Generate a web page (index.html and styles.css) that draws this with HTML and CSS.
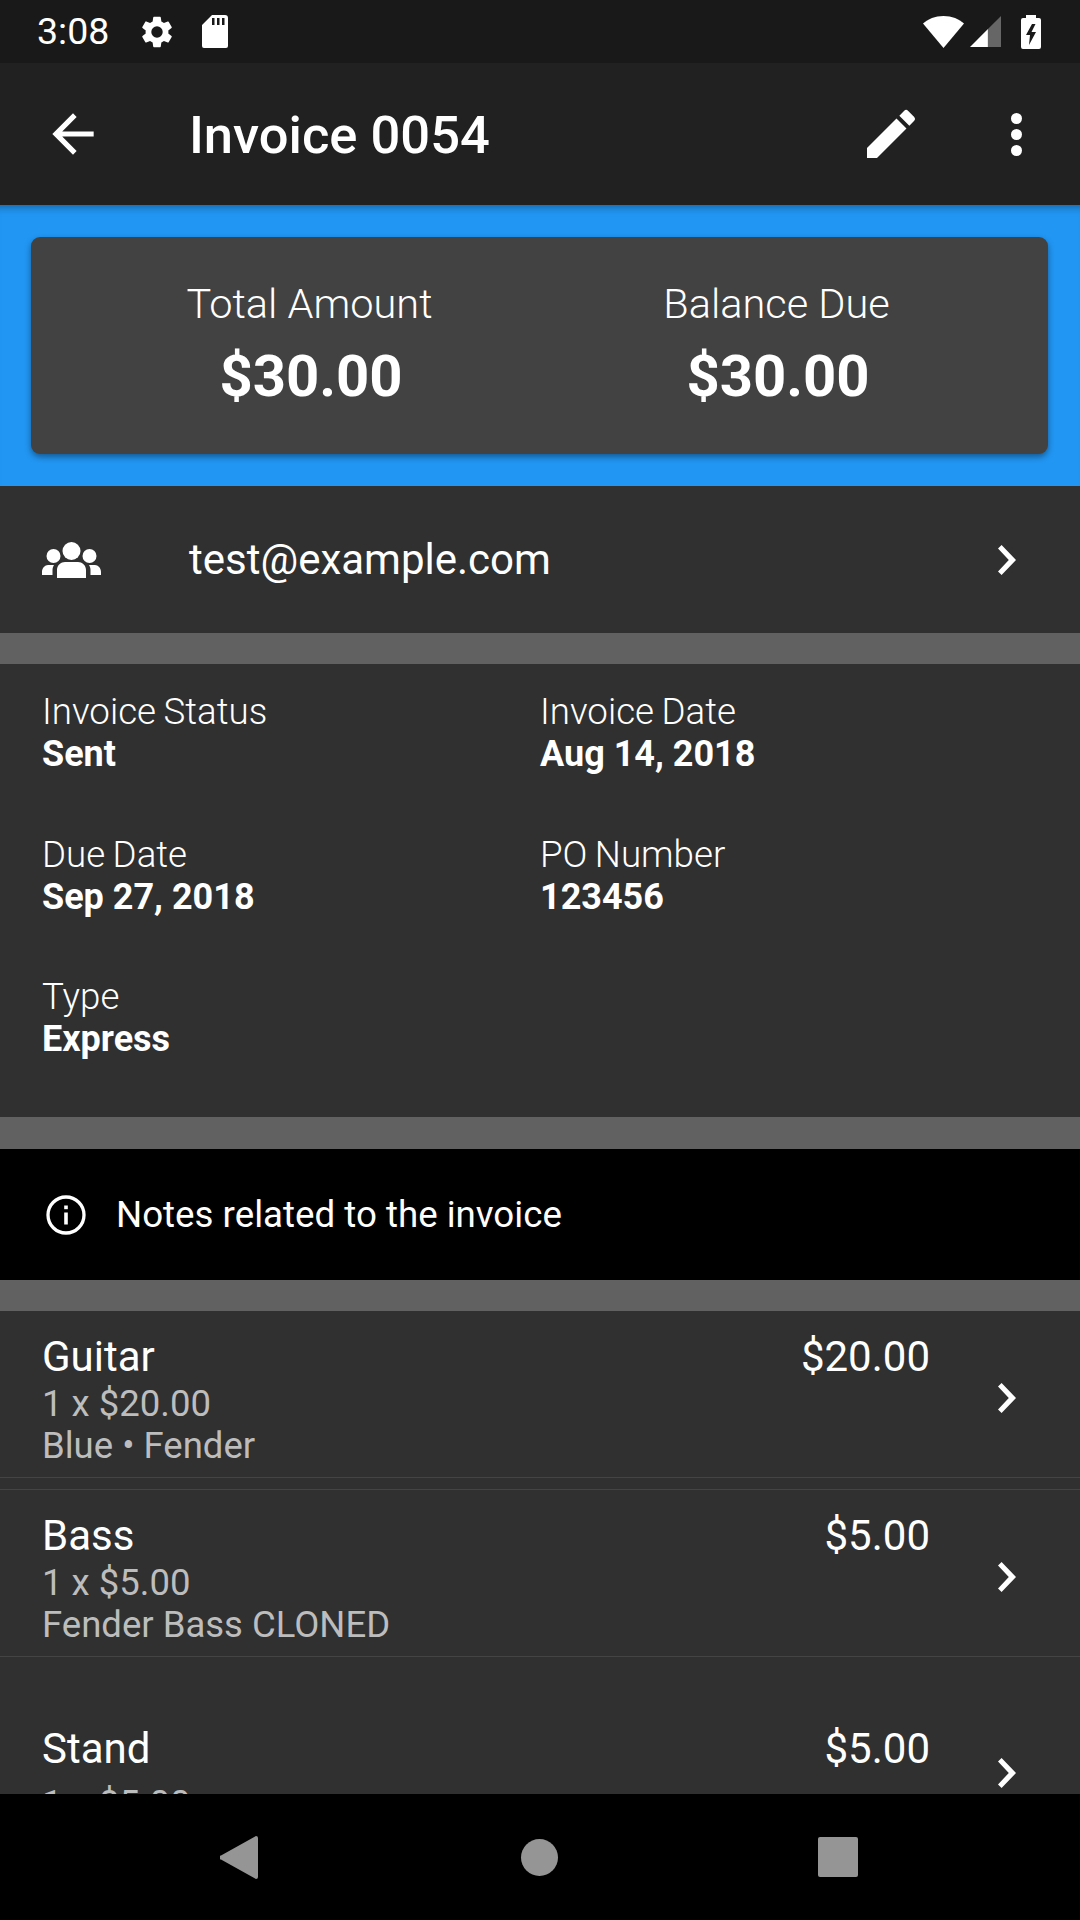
FILE: index.html
```html
<!DOCTYPE html>
<html lang="en">
<head>
<meta charset="utf-8">
<title>Invoice 0054</title>
<link rel="stylesheet" href="styles.css">
</head>
<body>
<div class="screen">
  <header class="status">
    <span class="clock">3:08</span>
    <svg class="st-gear" viewBox="0 0 24 24"><path d="M19.14 12.94c.04-.3.06-.61.06-.94s-.02-.64-.07-.94l2.03-1.58a.49.49 0 0 0 .12-.61l-1.92-3.32a.49.49 0 0 0-.59-.22l-2.39.96a7 7 0 0 0-1.62-.94l-.36-2.54a.48.48 0 0 0-.48-.41h-3.84a.47.47 0 0 0-.47.41l-.36 2.54c-.59.24-1.13.57-1.62.94l-2.39-.96a.48.48 0 0 0-.59.22L2.74 8.87a.47.47 0 0 0 .12.61l2.03 1.58c-.05.3-.09.63-.09.94s.02.64.07.94l-2.03 1.58a.49.49 0 0 0-.12.61l1.92 3.32c.12.22.37.29.59.22l2.39-.96c.5.38 1.03.7 1.62.94l.36 2.54c.05.24.24.41.48.41h3.84c.24 0 .44-.17.47-.41l.36-2.54c.59-.24 1.13-.56 1.62-.94l2.39.96c.22.08.47 0 .59-.22l1.92-3.32a.47.47 0 0 0-.12-.61zM12 15.6A3.6 3.6 0 1 1 12 8.4a3.6 3.6 0 0 1 0 7.2z"/></svg>
    <svg class="st-sd" viewBox="0 0 26 33"><path fill-rule="evenodd" d="M10 0h13a3 3 0 0 1 3 3v28a2 2 0 0 1-2 2H2a2 2 0 0 1-2-2V10zM10 3v7h2.500V3zM15 3v7h2.500V3zM20 3v7h2.500V3z"/></svg>
    <span class="grow"></span>
    <svg class="st-wifi" viewBox="0 0 41 32"><path d="M20.500 32 0 7.500C5 3 12 0 20.500 0S36 3 41 7.500z"/></svg>
    <svg class="st-signal" viewBox="0 0 32 32"><path fill="#fff" d="M0 32 18.500 13.500V32z"/><path fill="#666" d="M18.500 13.500 32 0v32H18.500z"/></svg>
    <svg class="st-batt" viewBox="0 0 20 34"><path fill-rule="evenodd" d="M5 3V0h10v3h3a2 2 0 0 1 2 2v27a2 2 0 0 1-2 2H2a2 2 0 0 1-2-2V5a2 2 0 0 1 2-2zM11 9 5 20h4l-1 10 7-13h-4.500l4-8z"/></svg>
  </header>

  <div class="appbar">
    <svg class="ab-back" viewBox="0 0 24 24"><path d="M20 11H7.830l5.590-5.590L12 4l-8 8 8 8 1.410-1.410L7.830 13H20z"/></svg>
    <h1 class="ab-title">Invoice 0054</h1>
    <svg class="ab-edit" viewBox="0 0 24 24"><path d="M3 17.250V21h3.750L17.810 9.940l-3.750-3.750zM20.710 7.040a1 1 0 0 0 0-1.410l-2.340-2.340a1 1 0 0 0-1.410 0l-1.830 1.830 3.750 3.750z"/></svg>
    <svg class="ab-more" viewBox="0 0 11 43"><circle cx="5.500" cy="5.500" r="5.500"/><circle cx="5.500" cy="21.500" r="5.500"/><circle cx="5.500" cy="37.500" r="5.500"/></svg>
  </div>

  <section class="hero">
    <div class="card">
      <div class="total"><div class="t-label">Total Amount</div><div class="t-value">$30.00</div></div>
      <div class="total"><div class="t-label">Balance Due</div><div class="t-value">$30.00</div></div>
    </div>
  </section>

  <div class="client">
    <svg class="cl-icon" viewBox="0 0 59 36"><circle cx="29.500" cy="9" r="9"/><circle cx="11.500" cy="14" r="7"/><circle cx="47.500" cy="14" r="7"/><path d="M15 36V28c0-5 4-8 8-8h13c4 0 8 3 8 8v8zM0 33v-3c0-4 3-7 6-7h6c-1 2-1.500 3-1.500 5v5zM59 33v-3c0-4-3-7-6-7h-6c1 2 1.500 3 1.500 5v5z"/></svg>
    <span class="cl-mail">test@example.com</span>
    <svg class="chev" viewBox="0 0 15 25"><path d="M3 0 15 12.500 3 25 0 22l9-9.500L0 3z"/></svg>
  </div>

  <div class="gap"></div>

  <section class="details">
    <div class="d-cell"><div class="d-label">Invoice Status</div><div class="d-value">Sent</div></div>
    <div class="d-cell"><div class="d-label">Invoice Date</div><div class="d-value">Aug 14, 2018</div></div>
    <div class="d-cell"><div class="d-label">Due Date</div><div class="d-value">Sep 27, 2018</div></div>
    <div class="d-cell"><div class="d-label">PO Number</div><div class="d-value">123456</div></div>
    <div class="d-cell"><div class="d-label">Type</div><div class="d-value">Express</div></div>
  </section>

  <div class="gap gap-wide"></div>

  <div class="notes">
    <svg class="n-icon" viewBox="0 0 40 40"><circle cx="20" cy="20" r="18" fill="none" stroke="#fff" stroke-width="3.300"/><rect x="18.200" y="17.500" width="3.600" height="12"/><rect x="18.200" y="10.500" width="3.600" height="3.700"/></svg>
    <span class="n-text">Notes related to the invoice</span>
  </div>

  <div class="gap"></div>

  <section class="items">
    <div class="item item-a">
      <div class="i-main"><div class="i-name">Guitar</div><div class="i-sub">1 x $20.00</div><div class="i-sub">Blue • Fender</div></div>
      <div class="i-price">$20.00</div>
      <svg class="chev" viewBox="0 0 15 25"><path d="M3 0 15 12.500 3 25 0 22l9-9.500L0 3z"/></svg>
    </div>
    <div class="item item-b">
      <div class="i-main"><div class="i-name">Bass</div><div class="i-sub">1 x $5.00</div><div class="i-sub">Fender Bass CLONED</div></div>
      <div class="i-price">$5.00</div>
      <svg class="chev" viewBox="0 0 15 25"><path d="M3 0 15 12.500 3 25 0 22l9-9.500L0 3z"/></svg>
    </div>
    <div class="item item-c">
      <div class="i-main"><div class="i-name">Stand</div><div class="i-sub">1 x $5.00</div></div>
      <div class="i-price">$5.00</div>
      <svg class="chev" viewBox="0 0 15 25"><path d="M3 0 15 12.500 3 25 0 22l9-9.500L0 3z"/></svg>
    </div>
  </section>

  <nav class="navbar">
    <svg class="nav-back" viewBox="0 0 38 43"><path d="M36 0a2 2 0 0 1 2 2v39a2 2 0 0 1-2 2L1 23.500a2 2 0 0 1 0-4z"/></svg>
    <span class="nav-home"></span>
    <span class="nav-recent"></span>
  </nav>
</div>
</body>
</html>
```
FILE: styles.css
```css
* { box-sizing: border-box; margin: 0; padding: 0; }
html, body { background: #303030; }
body { font-family: Roboto, "Liberation Sans", sans-serif; color: #fff; }
svg { display: block; fill: #fff; flex: none; }

.screen { width: 1080px; height: 1920px; display: flex; flex-direction: column; overflow: hidden; }

.status { height: 63px; flex: none; background: #191919; display: flex; align-items: center; padding: 0 39px 0 37px; }
.clock { font-size: 37.500px; font-weight: 400; line-height: 63px; margin-right: 29px; }
.st-gear { width: 38px; height: 38px; margin-right: 26px; }
.st-sd { width: 26px; height: 33px; }
.grow { flex: 1; }
.st-wifi { width: 41px; height: 32px; margin-right: 6px; }
.st-signal { width: 31px; height: 31px; margin-right: 20px; }
.st-batt { width: 20px; height: 34px; }

.appbar { height: 142px; flex: none; background: #212121; display: flex; align-items: center; position: relative; z-index: 1; }
.ab-back { width: 62px; height: 62px; margin-left: 42px; }
.ab-title { font-size: 52.500px; font-weight: 500; margin-left: 85px; flex: 1; line-height: 1; padding-top: 3px; }
.ab-edit { width: 64px; height: 64px; margin-right: 88px; }
.ab-more { width: 11px; height: 43px; margin-right: 58px; }

.hero { height: 281px; flex: none; background: #2196f3; padding: 32px 32px 32px 31px; box-shadow: inset 0 10px 8px -8px rgba(0,0,0,.35); }
.card { height: 217px; background: #424242; border-radius: 9px; box-shadow: 0 3px 6px rgba(0,0,0,.4); display: grid; grid-template-columns: 467px 467px; padding: 42px 0 0 45px; }
.total { text-align: center; }
.t-label { font-size: 41.500px; font-weight: 300; line-height: 50px; }
.t-value { font-size: 58px; font-weight: 700; line-height: 70px; margin-top: 12px; padding-left: 3px; }

.client { height: 147px; flex: none; background: #303030; display: flex; align-items: center; padding-left: 42px; }
.cl-icon { width: 59px; height: 36px; }
.cl-mail { font-size: 42px; font-weight: 400; margin-left: 88px; flex: 1; }
.chev { width: 18px; height: 30px; margin-right: 64px; }

.gap { height: 31px; flex: none; background: #616161; }
.gap-wide { height: 32px; }

.details { height: 453px; flex: none; background: #303030; display: grid; grid-template-columns: 498px 1fr; grid-auto-rows: 142.500px; padding: 27px 42px 0; }
.d-label { font-size: 36.700px; font-weight: 300; line-height: 42px; word-spacing: -1.500px; }
.d-value { font-size: 36px; font-weight: 700; line-height: 42px; }

.notes { height: 131px; flex: none; background: #000; display: flex; align-items: center; padding-left: 46px; }
.n-icon { width: 40px; height: 40px; }
.n-text { font-size: 36.700px; font-weight: 400; margin-left: 30px; }

.items { flex: 1; min-height: 0; overflow: hidden; background: #303030; }
.item { display: flex; padding: 20px 0 0 42px; border-bottom: 1px solid #444; }
.item-a { height: 167px; margin-bottom: 11px; }
.item-b { height: 168px; border-top: 1px solid #444; }
.item-c { border: 0; padding-top: 66px; height: 200px; }
.i-main { flex: 1; }
.i-name { font-size: 42px; line-height: 52px; }
.i-sub { font-size: 36.500px; line-height: 42px; color: #bdbdbd; }
.item-c .i-sub { margin-top: 8px; }
.i-price { font-size: 42px; line-height: 52px; margin-right: 68px; }
.item > .chev { align-self: flex-start; margin-top: 52px; }
.item-c > .chev { margin-top: 35px; }

.navbar { height: 126px; flex: none; background: #000; display: flex; align-items: center; }
.nav-back { width: 38px; height: 43px; margin-left: 220px; fill: #959595; }
.nav-home { width: 37px; height: 37px; border-radius: 50%; background: #959595; margin-left: 263px; }
.nav-recent { width: 40px; height: 40px; border-radius: 2px; background: #959595; margin-left: 260px; }
```
